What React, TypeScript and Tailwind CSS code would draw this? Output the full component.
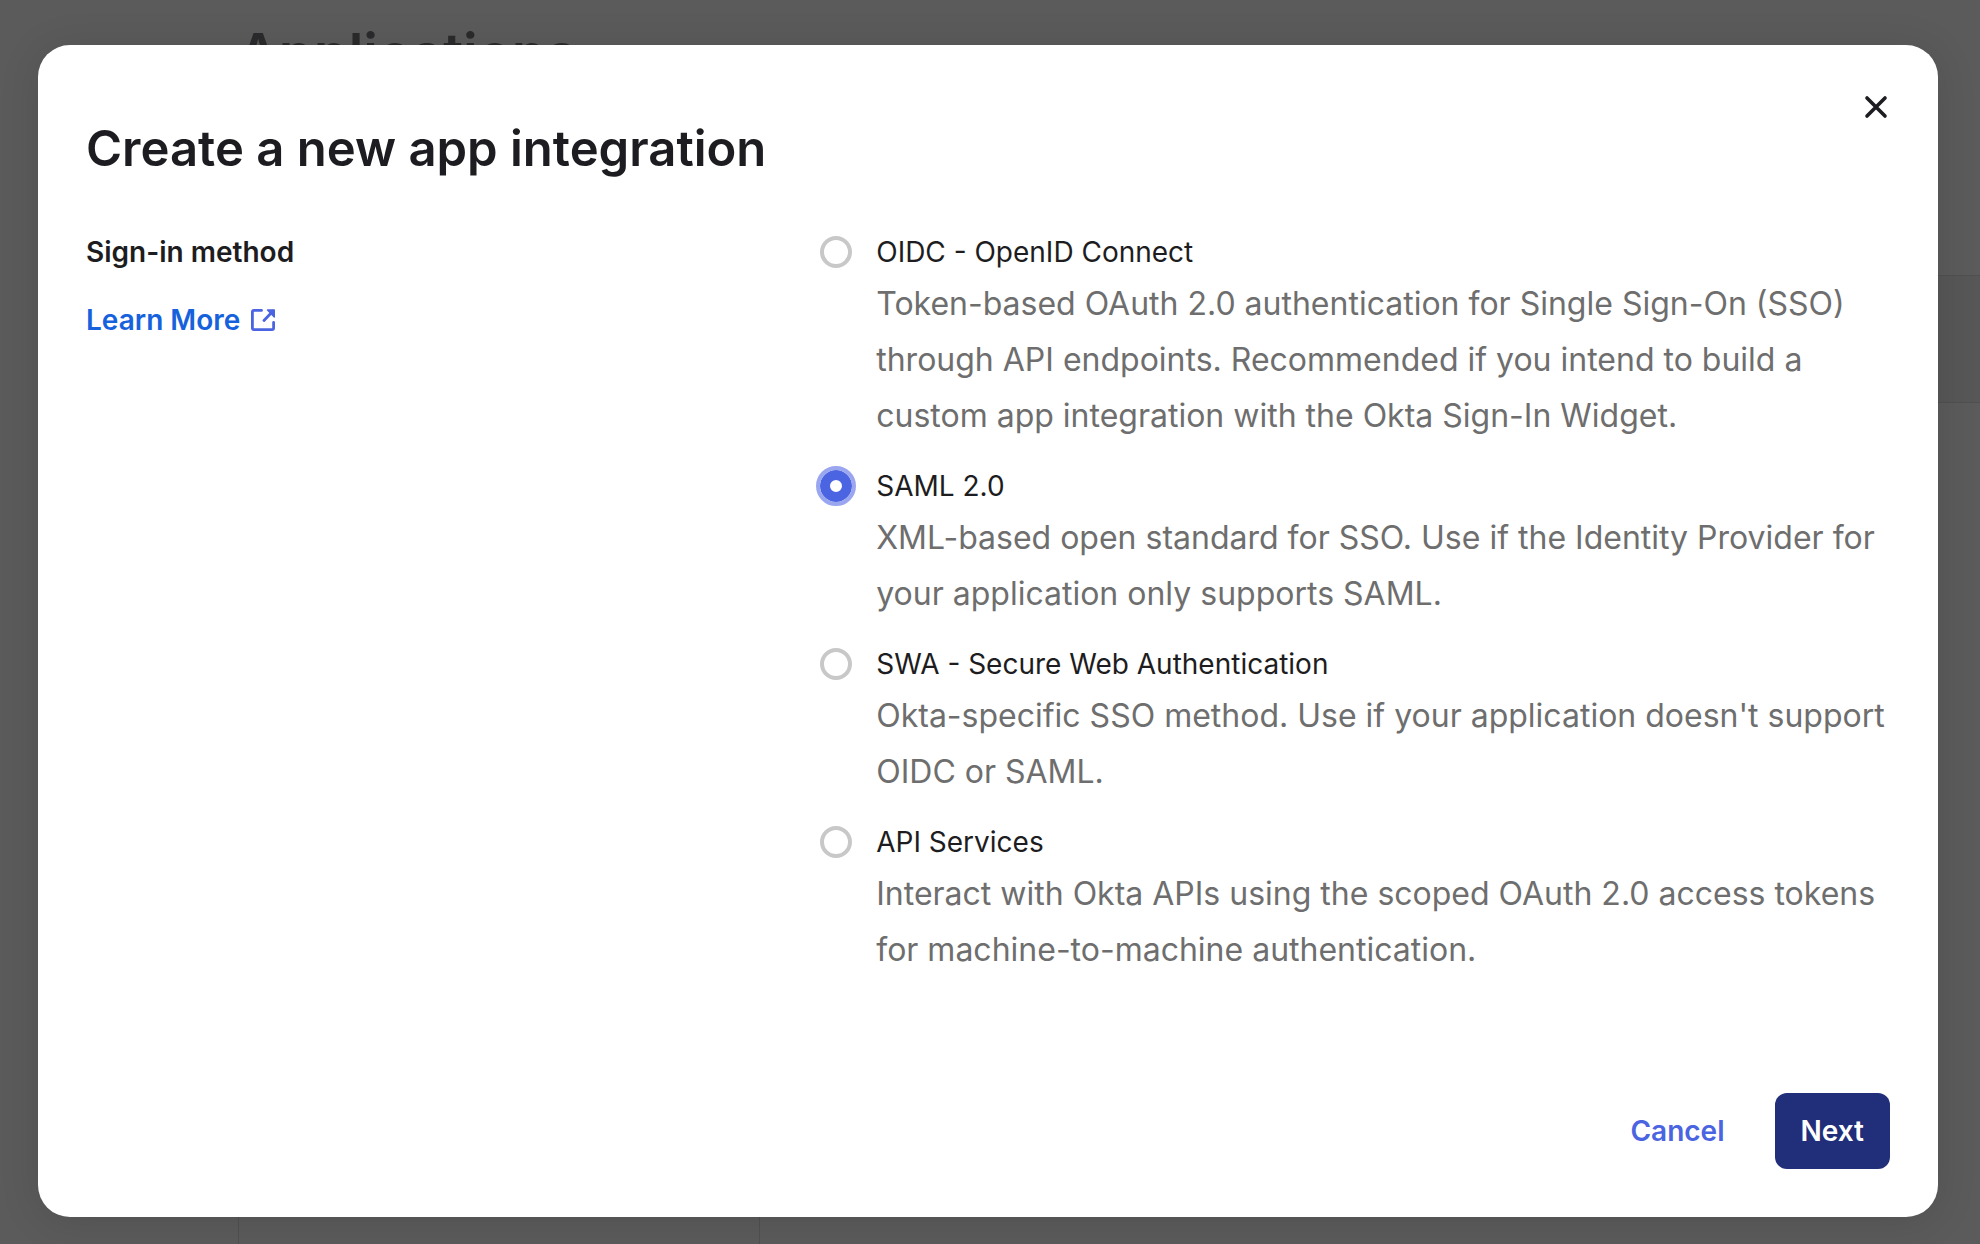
import { useState } from "react";

const methods = [
  { id: "oidc", label: "OIDC - OpenID Connect", text: "Token-based OAuth 2.0 authentication for Single Sign-On (SSO) through API endpoints. Recommended if you intend to build a custom app integration with the Okta Sign-In Widget." },
  { id: "saml", label: "SAML 2.0", text: "XML-based open standard for SSO. Use if the Identity Provider for your application only supports SAML." },
  { id: "swa", label: "SWA - Secure Web Authentication", text: "Okta-specific SSO method. Use if your application doesn't support OIDC or SAML." },
  { id: "api", label: "API Services", text: "Interact with Okta APIs using the scoped OAuth 2.0 access tokens for machine-to-machine authentication." },
];

export default function App() {
  const [selected, setSelected] = useState("saml");
  return (
    <div className="relative flex min-h-screen flex-col overflow-hidden bg-[#5b5b5b] pt-[45px] pr-[42px] pb-[27px] pl-[38px] font-['Inter',sans-serif] text-[#1d1d21]">
      <div className="absolute inset-0" aria-hidden="true">
        <p className="absolute top-5 left-[238px] text-[56px] leading-[68px] font-semibold text-[#2b2b2d]">Applications</p>
        <div className="absolute top-[275px] right-0 h-[128px] w-[60px] border-y border-[#505050] bg-[#575757]" />
        <div className="absolute bottom-0 left-[238px] h-[60px] w-[522px] border-x border-[#505050]" />
      </div>
      <main role="dialog" aria-labelledby="title" className="relative flex grow flex-col rounded-[32px] bg-white px-12 pb-12 shadow-[0_4px_40px_rgba(0,0,0,0.12)]">
        <button aria-label="Close" className="absolute top-[48px] right-[48px] p-0.5">
          <svg width="24" height="24" viewBox="0 0 24 24" fill="none" stroke="currentColor" strokeWidth="3.6" strokeLinecap="round"><path d="M3 3 21 21M21 3 3 21" /></svg>
        </button>
        <h1 id="title" className="pt-[72px] text-[49px] leading-[64px] font-semibold">Create a new app integration</h1>
        <div className="mt-[51px] flex grow">
          <div className="w-[40.7%] shrink-0 text-[28px] leading-[40px] font-semibold">
            <h2>Sign-in method</h2>
            <a href="#learn" className="mt-7 flex items-center gap-[10px] text-[#1662dd]">
              Learn More
              <svg width="26" height="24" viewBox="0 0 26 24" fill="none" stroke="#4b64e1" strokeWidth="2.8" strokeLinecap="round" strokeLinejoin="round"><path d="M11.5 2.4H4Q2.4 2.4 2.4 4V20Q2.4 21.6 4 21.6H22Q23.6 21.6 23.6 20V14.5M23 3 14 12.5" /><path d="M17.5 1.9H24.3V9Z" fill="#4b64e1" strokeWidth="1.4" /></svg>
            </a>
          </div>
          <div className="flex min-w-0 grow flex-col gap-[22px]" role="radiogroup" aria-label="Sign-in method">
            {methods.map((m) => (
              <div key={m.id} className="flex gap-6">
                <input type="radio" id={m.id} name="method" checked={selected === m.id} onChange={() => setSelected(m.id)} className="mt-1 size-8 shrink-0 appearance-none rounded-full border-4 border-[#c8c8c8] bg-white checked:border-[10px] checked:border-[#4b64e1] checked:outline-4 checked:outline-[#9aa7f0]" />
                <div>
                  <label htmlFor={m.id} className="block text-[28px] leading-[40px]">{m.label}</label>
                  <p className="mt-1 text-[32px] leading-[56px] text-[#6e6e6e]">{m.text}</p>
                </div>
              </div>
            ))}
          </div>
        </div>
        <div className="flex justify-end gap-6 text-[28px] leading-[40px] font-semibold">
          <button className="px-[26px] py-[18px] text-[#4b64e1]">Cancel</button>
          <button className="rounded-xl bg-[#212e7a] px-[26px] py-[18px] text-white">Next</button>
        </div>
      </main>
    </div>
  );
}
